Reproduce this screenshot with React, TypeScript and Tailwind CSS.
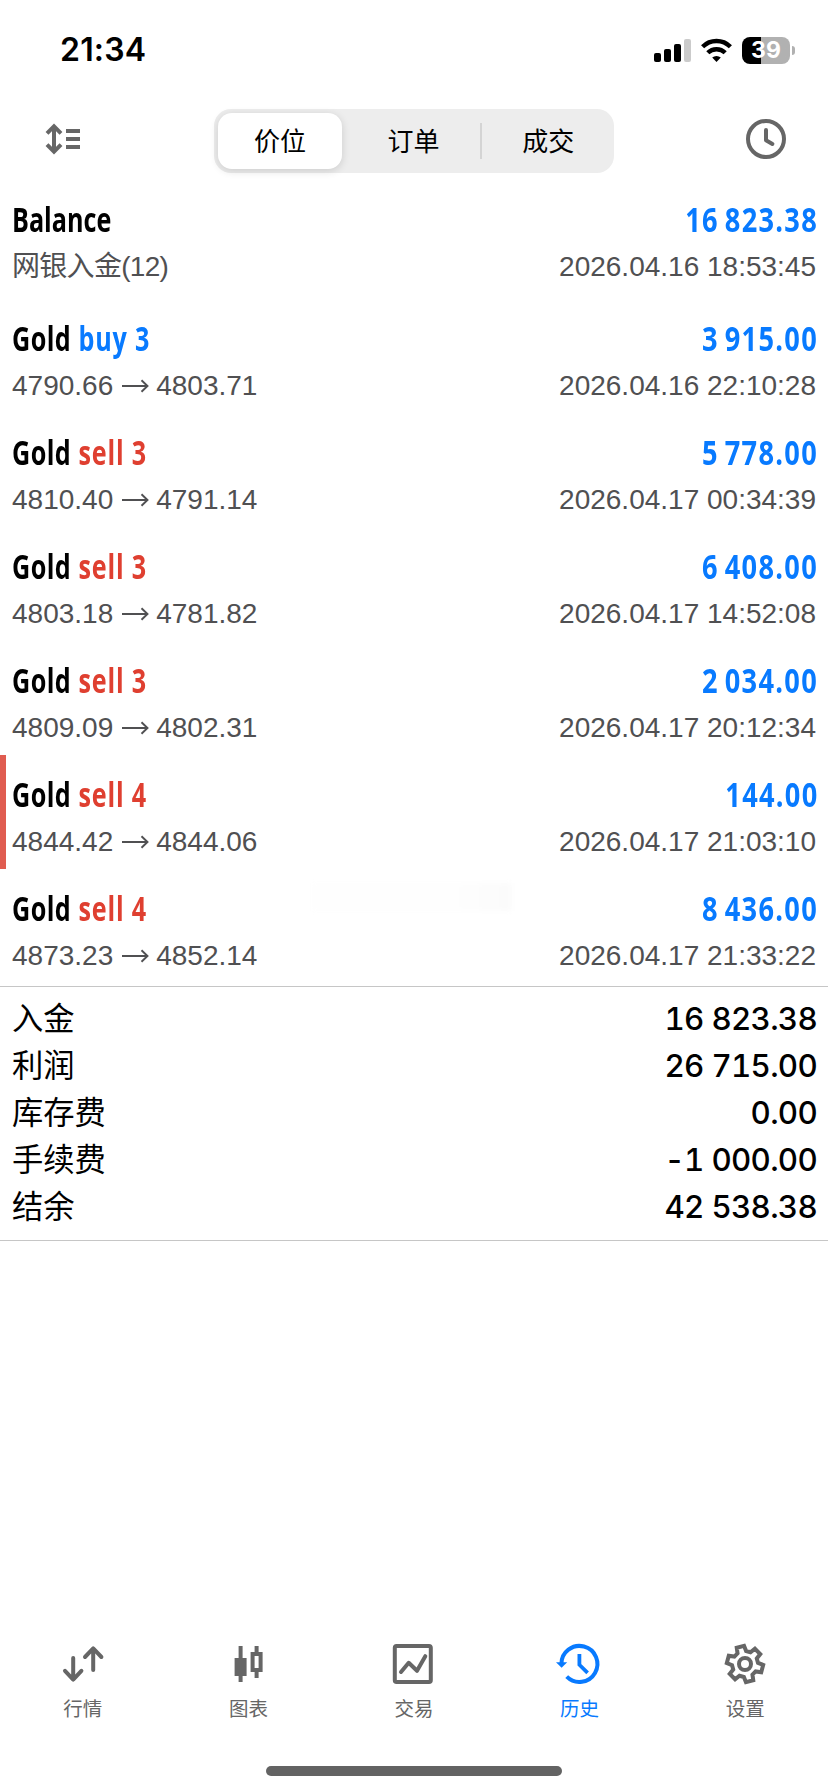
import * as React from 'react'

type Deal = {
  symbol: string
  side?: 'buy' | 'sell'
  volume?: number
  profit: string
  detail: string
  time: string
  marked?: boolean
}

const DEALS: Deal[] = [
  { symbol: 'Balance', profit: '16 823.38', detail: '网银入金(12)', time: '2026.04.16 18:53:45' },
  { symbol: 'Gold', side: 'buy', volume: 3, profit: '3 915.00', detail: '4790.66 > 4803.71', time: '2026.04.16 22:10:28' },
  { symbol: 'Gold', side: 'sell', volume: 3, profit: '5 778.00', detail: '4810.40 > 4791.14', time: '2026.04.17 00:34:39' },
  { symbol: 'Gold', side: 'sell', volume: 3, profit: '6 408.00', detail: '4803.18 > 4781.82', time: '2026.04.17 14:52:08' },
  { symbol: 'Gold', side: 'sell', volume: 3, profit: '2 034.00', detail: '4809.09 > 4802.31', time: '2026.04.17 20:12:34' },
  { symbol: 'Gold', side: 'sell', volume: 4, profit: '144.00', detail: '4844.42 > 4844.06', time: '2026.04.17 21:03:10', marked: true },
  { symbol: 'Gold', side: 'sell', volume: 4, profit: '8 436.00', detail: '4873.23 > 4852.14', time: '2026.04.17 21:33:22' },
]

const SUMMARY = [
  { label: '入金', value: '16 823.38' },
  { label: '利润', value: '26 715.00' },
  { label: '库存费', value: '0.00' },
  { label: '手续费', value: '-1 000.00' },
  { label: '结余', value: '42 538.38' },
]

// Six teeth, turned by 15 degrees
const GEAR_POINTS = Array.from({ length: 6 })
  .flatMap((_, i) => {
    const mid = 15 + i * 60
    return [
      [13, mid - 20],
      [18.2, mid - 12],
      [18.2, mid + 12],
      [13, mid + 20],
    ]
  })
  .map(([r, deg]) => {
    const a = (deg * Math.PI) / 180
    return (22 + r * Math.cos(a)).toFixed(2) + ',' + (22 + r * Math.sin(a)).toFixed(2)
  })
  .join(' ')

function StatusBar() {
  return (
    <header className="flex h-[100px] items-center justify-between pl-[60px] pr-[33px]">
      <div className="font-['Inter'] text-[32px] font-semibold leading-none tracking-[0.2px]">21:34</div>
      <div className="flex items-center">
        <svg width="37" height="24" viewBox="0 0 37 24" className="mr-[10px]">
          <rect x="0" y="15" width="7" height="9" rx="2" />
          <rect x="10" y="11" width="7" height="13" rx="2" />
          <rect x="20" y="6" width="7" height="18" rx="2" />
          <rect x="30" y="1" width="7" height="23" rx="2" fill="#cbcbcb" />
        </svg>
        <svg width="31" height="24" viewBox="0 0 31 24" className="mr-[10px]" fill="none" stroke="#000" strokeWidth="4.4">
          <path d="M1.6 8.8a19.6 19.6 0 0 1 27.8 0" />
          <path d="M6.8 14.8a12.3 12.3 0 0 1 17.4 0" />
          <path d="M15.5 24l-4.3-4.4a6.3 6.3 0 0 1 8.6 0z" fill="#000" stroke="none" />
        </svg>
        <div className="flex h-[27px] w-12 items-center justify-center rounded-[8px] bg-linear-to-r from-black from-40% to-[#b1b1b1] to-40% font-['Inter'] text-[23px] font-bold leading-none text-white">
          39
        </div>
        <div className="ml-[2px] h-[9px] w-[3px] rounded-r-full bg-[#b1b1b1]" />
      </div>
    </header>
  )
}

function Toolbar() {
  return (
    <nav className="flex h-[80px] items-center justify-between px-[42px]">
      <svg width="40" height="40" viewBox="0 0 40 40" className="mb-[2px]" fill="none" stroke="#666" strokeWidth="4">
        <path d="M12 8v24M5 14.4l7-7 7 7M5 25.6l7 7 7-7" />
        <path d="M24 12h14M24 20h14M24 28h14" />
      </svg>
      <div className="mt-[2px] grid h-16 w-[400px] grid-cols-3 items-center rounded-[17px] bg-[#ededed] text-center text-[26px] leading-none">
        <div className="ml-1 flex h-14 w-[124px] items-center justify-center rounded-[14px] bg-white pt-[2px] shadow-[0_2px_8px_rgba(0,0,0,0.14)]">
          价位
        </div>
        <div className="-mr-px flex h-9 items-center justify-center border-r-2 border-[#d4d4d4] pt-[2px]">订单</div>
        <div className="flex h-9 items-center justify-center pl-[2px] pt-[2px]">成交</div>
      </div>
      <svg width="40" height="40" viewBox="0 0 40 40" className="mb-[2px]" fill="none" stroke="#666" strokeWidth="4">
        <circle cx="20" cy="20" r="18" />
        <path d="M20 11v10.2l6.4 3.8" strokeLinecap="round" strokeLinejoin="round" />
      </svg>
    </nav>
  )
}

function Detail({ text }: { text: string }) {
  const [open, close] = text.split(' > ')
  if (!close) return <span className="tracking-[-0.7px]">{open}</span>

  return (
    <span className="flex items-center">
      {open}
      <svg width="28" height="14" viewBox="0 0 28 14" className="ml-2 mr-[7px]" fill="none" stroke="currentColor" strokeWidth="1.9">
        <path d="M1 7h25M20.5 1.2l6 5.8-6 5.8" />
      </svg>
      {close}
    </span>
  )
}

function DealRow({ deal }: { deal: Deal }) {
  return (
    <li
      className={
        deal.marked
          ? 'h-[114px] border-l-[6px] border-[#e05c50] pl-[6px] pr-3 pt-[17px]'
          : 'h-[114px] px-3 pt-[17px] first:h-[119px]'
      }
    >
      <div className="flex justify-between font-['Open_Sans'] text-[34px] font-bold leading-[44px]">
        <div className="origin-left scale-x-[0.74] whitespace-pre">
          <span className={deal.side ? 'tracking-[0.6px]' : ''}>{deal.symbol}</span>
          {deal.side && (
            <span
              className={
                deal.side === 'buy' ? 'tracking-[1.1px] text-[#087aff]' : 'tracking-[1.1px] text-[#df3f30]'
              }
            >
              {' ' + deal.side + ' ' + deal.volume}
            </span>
          )}
        </div>
        <div className="-mr-[2px] origin-right scale-x-[0.8] tracking-[1.6px] text-[#087aff] [word-spacing:-3px]">
          {deal.profit}
        </div>
      </div>
      <div className="mt-[6px] flex justify-between text-[28px] leading-10 text-[#505052]">
        <Detail text={deal.detail} />
        <span>{deal.time}</span>
      </div>
    </li>
  )
}

function Tab({ label, active, children }: { label: string; active?: boolean; children: React.ReactNode }) {
  return (
    <div className={active ? 'flex flex-col items-center text-[#087aff]' : 'flex flex-col items-center text-[#666]'}>
      <svg
        width="44"
        height="44"
        viewBox="0 0 44 44"
        fill="none"
        stroke="currentColor"
        strokeWidth="4"
        className="overflow-visible"
      >
        {children}
      </svg>
      <span className="mt-[11px] text-[19.5px] leading-6">{label}</span>
    </div>
  )
}

export default function App() {
  return (
    <div className="flex h-[1792px] w-[828px] flex-col overflow-hidden bg-white font-['Liberation_Sans','Noto_Sans_CJK_SC',sans-serif] text-black">
      <StatusBar />
      <Toolbar />

      <ul className="relative h-[806px]">
        {DEALS.map((deal) => (
          <DealRow key={deal.time} deal={deal} />
        ))}
        <li className="absolute left-[312px] top-[703px] h-7 w-[200px] bg-linear-to-r from-[#fefefe] from-70% to-[#fbfbfb] blur-[2px]" />
      </ul>

      <section className="h-[255px] border-y border-[#c6c6c6] px-3 pt-[9px]">
        {SUMMARY.map((item) => (
          <div
            key={item.label}
            className="flex h-[47px] justify-between font-['Inter','Noto_Sans_CJK_SC',sans-serif] text-[31.3px] leading-[47px]"
          >
            <span>{item.label}</span>
            <span className="-mr-[1px] font-medium tabular-nums tracking-[-0.7px]">{item.value}</span>
          </div>
        ))}
      </section>

      <footer className="mt-auto h-[150px]">
        <div className="grid grid-cols-5">
          <Tab label="行情">
            <path
              d="M12.2 16v21.5M4 28.8l8.2 8.8 8.2-8.8M32.2 28V6.6M24 15l8.2-8.6 8.2 8.6"
              strokeLinecap="round"
              strokeLinejoin="round"
            />
          </Tab>
          <Tab label="图表">
            <path d="M8.6 16h4V4h4v12h4v18h-4v6h-4v-6h-4z" fill="currentColor" stroke="none" />
            <path d="M26.6 12h8v16h-8zM30.6 4v8M30.6 28v8" />
          </Tab>
          <Tab label="交易">
            <rect x="2.8" y="4" width="36" height="36" rx="1.8" />
            <path d="M9 30l7.7-9.2 8.3 8 8.3-14.6" strokeLinecap="round" strokeLinejoin="round" />
          </Tab>
          <Tab label="历史" active>
            <path d="M3.4 22a18 18 0 1 1 5.3 12.7" />
            <path d="M-2 20.3H9.2l-5.6 5.4z" fill="currentColor" stroke="none" />
            <path d="M21.4 12v10.8l8.2 8" strokeWidth="3.8" />
          </Tab>
          <Tab label="设置">
            <polygon points={GEAR_POINTS} />
            <circle cx="22" cy="22" r="6" />
          </Tab>
        </div>
        <div className="mx-auto mt-[45px] h-[10px] w-[296px] rounded-full bg-[#636363]" />
      </footer>
    </div>
  )
}
